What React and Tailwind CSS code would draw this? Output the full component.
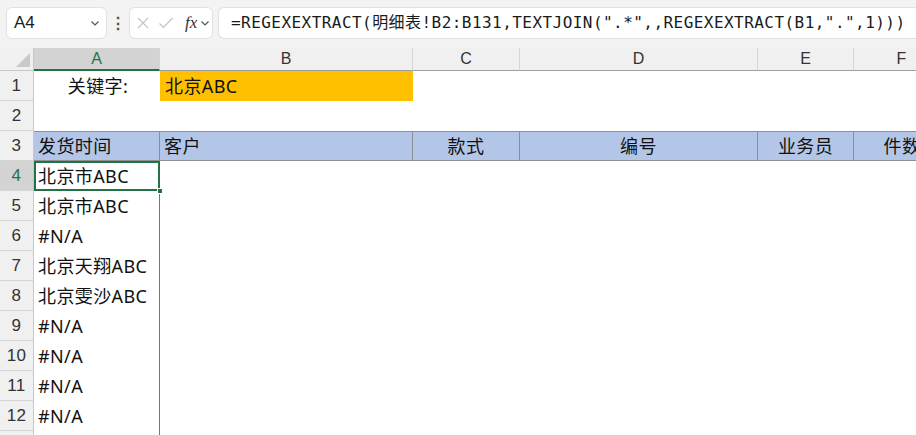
import React from 'react';

const cjk = { fontFamily: '"Noto Sans", "Noto Sans CJK SC", sans-serif' };
const num = { fontFamily: '"Liberation Sans", Arial, sans-serif' };

const cols = [
  { key: 'A', w: 'w-[126px]' },
  { key: 'B', w: 'w-[253px]' },
  { key: 'C', w: 'w-[107px]' },
  { key: 'D', w: 'w-[238px]' },
  { key: 'E', w: 'w-[96px]' },
  { key: 'F', w: 'w-[96px]' },
];

const spill = ['北京市ABC', '北京市ABC', '#N/A', '北京天翔ABC', '北京雯沙ABC', '#N/A', '#N/A', '#N/A', '#N/A', ''];

const Chevron = () => (
  <svg width="10" height="10" viewBox="0 0 10 10" className="shrink-0">
    <path d="M1.5 3.5 L5 7 L8.5 3.5" fill="none" stroke="#555" strokeWidth="1.2" />
  </svg>
);

const RowHead = ({ n, active }) => (
  <div
    style={num}
    className={`w-[34px] shrink-0 h-full flex items-center justify-center text-[17px] border-r border-b border-[#d5d5d5] border-r-[#c8c8c8] ${
      active ? 'bg-[#d3d3d3] text-[#217346]' : 'bg-[#f0f0f0] text-[#333]'
    }`}
  >
    {n}
  </div>
);

export default function App() {
  return (
    <div className="w-[916px] h-[435px] overflow-hidden bg-white" style={cjk}>
      {/* formula bar */}
      <div className="h-[48px] bg-[#f3f3f3] flex items-center pl-[6px] pb-[2px]">
        <div className="w-[101px] h-[32px] bg-white border border-[#e1e1e1] rounded-[6px] flex items-center justify-between pl-[7px] pr-[6px]">
          <span style={num} className="text-[17px] text-[#1a1a1a]">A4</span>
          <Chevron />
        </div>
        <div className="w-[22px] flex justify-center text-[#555] text-[16px] font-bold leading-none">⋮</div>
        <div className="w-[84px] h-[32px] bg-white border border-[#e1e1e1] rounded-[6px] flex items-center pl-[6px] pr-[2px]">
          <svg width="14" height="14" viewBox="0 0 14 14" className="shrink-0">
            <path d="M2 2 L12 12 M12 2 L2 12" stroke="#c4c4c4" strokeWidth="1.2" />
          </svg>
          <svg width="16" height="14" viewBox="0 0 16 14" className="ml-[8px] shrink-0">
            <path d="M1.5 7.5 L5.5 11.5 L14.5 2" fill="none" stroke="#c4c4c4" strokeWidth="1.2" />
          </svg>
          <span
            className="ml-[11px] text-[17px] italic text-[#333]"
            style={{ fontFamily: '"Liberation Serif", "Times New Roman", serif' }}
          >
            fx
          </span>
          <span className="ml-[3px]">
            <Chevron />
          </span>
        </div>
        <div className="ml-[5px] flex-1 h-[32px] bg-white border border-[#e1e1e1] rounded-l-[6px] border-r-0 flex items-center pl-[12px]">
          <span
            className="text-[16px] text-[#1a1a1a] tracking-[0.45px] whitespace-nowrap"
            style={{ fontFamily: '"DejaVu Sans Mono", "Noto Sans CJK SC", monospace' }}
          >
            =REGEXEXTRACT(明细表!B2:B131,TEXTJOIN(".*",,REGEXEXTRACT(B1,".",1)))
          </span>
        </div>
      </div>

      {/* column headers */}
      <div className="h-[23px] flex">
        <div className="w-[34px] shrink-0 bg-[#f0f0f0] border-r border-b border-[#c8c8c8] relative">
          <svg width="14" height="14" viewBox="0 0 14 14" className="absolute right-[3px] bottom-[3px]">
            <path d="M14 0 L14 14 L0 14 Z" fill="#c9c9c9" />
          </svg>
        </div>
        {cols.map((c) => (
          <div
            key={c.key}
            style={num}
            className={`${c.w} shrink-0 flex items-center justify-center text-[16px] border-r border-[#d5d5d5] ${
              c.key === 'A'
                ? 'bg-[#d3d3d3] text-[#217346] border-b-2 border-b-[#217346]'
                : 'bg-[#f0f0f0] text-[#333] border-b border-b-[#9e9e9e]'
            }`}
          >
            {c.key}
          </div>
        ))}
      </div>

      {/* row 1 */}
      <div className="h-[30px] flex text-[18px] text-[#111] tracking-[0.4px]">
        <RowHead n="1" />
        <div className="w-[126px] shrink-0 flex items-center justify-center pl-[2px]">关键字:</div>
        <div className="w-[253px] shrink-0 flex items-center pl-[5px] bg-[#ffc000]">北京ABC</div>
      </div>

      {/* row 2 */}
      <div className="h-[30px] flex">
        <RowHead n="2" />
      </div>

      {/* row 3 header */}
      <div className="h-[30px] flex text-[18px] text-[#111] tracking-[0.4px]">
        <RowHead n="3" />
        <div className="flex-1 flex bg-[#b4c6e7] border-t border-b border-[#8f8f8f]">
          <div className="w-[126px] shrink-0 flex items-center pl-[4px] border-r border-[#8f8f8f]">发货时间</div>
          <div className="w-[253px] shrink-0 flex items-center pl-[4px] border-r border-[#8f8f8f]">客户</div>
          <div className="w-[107px] shrink-0 flex items-center justify-center border-r border-[#8f8f8f]">款式</div>
          <div className="w-[238px] shrink-0 flex items-center justify-center border-r border-[#8f8f8f]">编号</div>
          <div className="w-[96px] shrink-0 flex items-center justify-center border-r border-[#8f8f8f]">业务员</div>
          <div className="w-[96px] shrink-0 flex items-center justify-center">件数</div>
        </div>
      </div>

      {/* spill rows */}
      {spill.map((v, i) => (
        <div key={i} className="h-[30px] flex text-[18px] text-[#111] tracking-[0.4px]">
          <RowHead n={i < 9 ? String(i + 4) : ''} active={i === 0} />
          <div
            className={`w-[126px] shrink-0 flex items-center pl-[4px] relative border-r border-[#4f7cc2] ${
              i === 0 ? 'outline-2 outline-[#217346] -outline-offset-2' : ''
            }`}
          >
            {v}
            {i === 0 && <div className="absolute right-[-4px] bottom-[-3px] w-[6px] h-[6px] bg-[#217346] border border-white z-10" />}
          </div>
        </div>
      ))}
    </div>
  );
}
